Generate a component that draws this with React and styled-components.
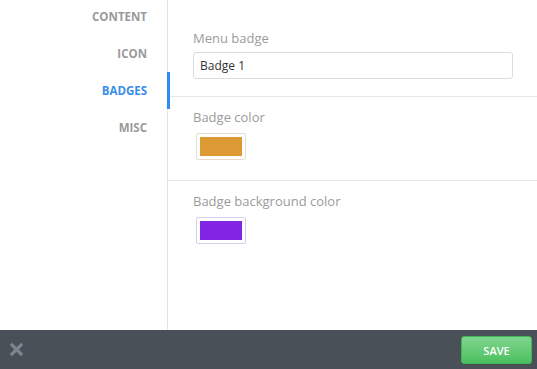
import React from 'react';
import styled, { createGlobalStyle } from 'styled-components';

const GlobalStyle = createGlobalStyle`
  html, body {
    margin: 0;
    padding: 0;
    background: #fff;
  }
  body {
    font-family: "Open Sans", "Liberation Sans", sans-serif;
  }
`;

const Frame = styled.div`
  width: 537px;
  height: 369px;
  display: flex;
  flex-direction: column;
  overflow: hidden;
`;

const Main = styled.div`
  flex: 1;
  display: flex;
  min-height: 0;
`;

const Sidebar = styled.nav`
  width: 167px;
  border-right: 1px solid #e4e4e4;
  display: flex;
  flex-direction: column;
  padding-top: 0;
  margin-top: -2px;
`;

const NavItem = styled.div`
  position: relative;
  height: 37px;
  display: flex;
  align-items: center;
  justify-content: flex-end;
  padding-right: 20px;
  font-size: 11.5px;
  font-weight: 700;
  text-transform: uppercase;
  color: ${p => (p.$active ? '#3a8ee8' : '#9a9a9a')};

  &::after {
    content: '';
    display: ${p => (p.$active ? 'block' : 'none')};
    position: absolute;
    top: 0;
    bottom: 0;
    right: -3px;
    width: 3px;
    background: #2f8ff0;
  }
`;

const Content = styled.div`
  flex: 1;
  display: flex;
  flex-direction: column;
`;

const Section = styled.div`
  padding: ${p => (p.$first ? '29px' : '11px')} 24px ${p => p.$bottom}px 25px;
  border-bottom: ${p => (p.$last ? 'none' : '1px solid #e6e6e6')};
`;

const Label = styled.div`
  font-size: 13px;
  line-height: 18px;
  color: #9b9b9b;
  margin-bottom: ${p => p.$gap}px;
`;

const TextInput = styled.input`
  display: block;
  box-sizing: border-box;
  width: 100%;
  height: 27px;
  padding: 0 6px;
  border: 1px solid #dcdcdc;
  border-radius: 3px;
  font-family: "Open Sans", "Liberation Sans", sans-serif;
  font-size: 12px;
  color: #333;
  outline: none;
`;

const Swatch = styled.div`
  box-sizing: border-box;
  width: 50px;
  height: 27px;
  margin-left: 3px;
  padding: 3px;
  border: 1px solid ${p => p.$border};
  border-radius: 2px;
  background: #fff;

  & > div {
    width: 100%;
    height: 100%;
    background: ${p => p.$color};
  }
`;

const Footer = styled.footer`
  height: 39px;
  background: #4a5058;
  display: flex;
  align-items: center;
  justify-content: space-between;
  padding: 0 5px 0 10px;
`;

const CloseButton = styled.button`
  border: none;
  background: none;
  padding: 0;
  display: flex;
  cursor: pointer;
`;

const SaveButton = styled.button`
  width: 71px;
  height: 28px;
  margin-top: 1px;
  border: 1px solid #42b555;
  border-radius: 3px;
  background: linear-gradient(#80d58f, #4bc05f);
  color: #fff;
  font-family: "Open Sans", "Liberation Sans", sans-serif;
  font-size: 11px;
  font-weight: 600;
  text-transform: uppercase;
  cursor: pointer;
`;

const tabs = ['Content', 'Icon', 'Badges', 'Misc'];

export default function App() {
  return (
    <Frame>
      <GlobalStyle />
      <Main>
        <Sidebar>
          {tabs.map(t => (
            <NavItem key={t} $active={t === 'Badges'}>
              {t}
            </NavItem>
          ))}
        </Sidebar>
        <Content>
          <Section $first $bottom={17}>
            <Label $gap={5}>Menu badge</Label>
            <TextInput defaultValue="Badge 1" />
          </Section>
          <Section $bottom={20}>
            <Label $gap={7}>Badge color</Label>
            <Swatch $color="#dd9933" $border="#e8dccb">
              <div />
            </Swatch>
          </Section>
          <Section $last $bottom={0}>
            <Label $gap={7}>Badge background color</Label>
            <Swatch $color="#8224e3" $border="#d9cbed">
              <div />
            </Swatch>
          </Section>
        </Content>
      </Main>
      <Footer>
        <CloseButton aria-label="Close">
          <svg width="13" height="13" viewBox="0 0 13 13">
            <path d="M2 2 L11 11 M11 2 L2 11" stroke="#7c848d" strokeWidth="3.2" strokeLinecap="square" />
          </svg>
        </CloseButton>
        <SaveButton>Save</SaveButton>
      </Footer>
    </Frame>
  );
}
